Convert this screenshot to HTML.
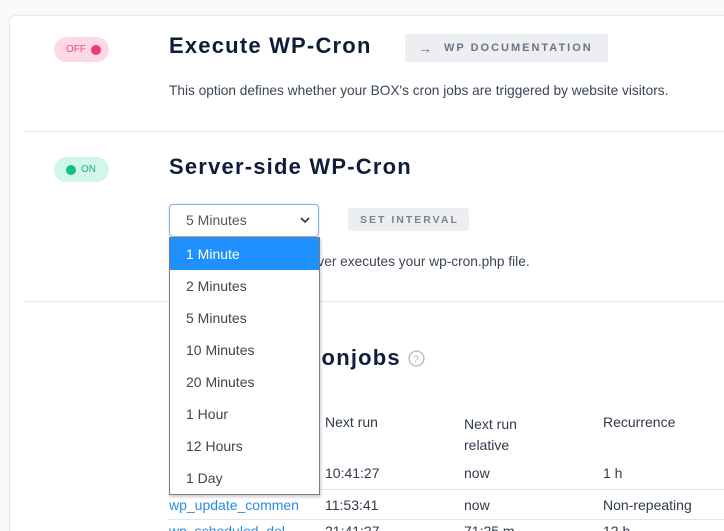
<!DOCTYPE html>
<html><head><meta charset="utf-8"><style>
*{margin:0;padding:0;box-sizing:border-box}
html,body{width:724px;height:531px;overflow:hidden}
body{background:#f8f9fb;font-family:"Liberation Sans",sans-serif;position:relative;color:#1e2a3e}
.card{position:absolute;left:9px;top:15px;width:730px;height:540px;background:#fff;border:1px solid #e4e7ec;border-radius:6px}
.a{position:absolute}
.pill{position:absolute;height:25px;border-radius:13px;font-size:10px;display:flex;align-items:center;gap:5px;padding:0 12px}
.dot{width:10px;height:10px;border-radius:50%;flex-shrink:0}
h2{position:absolute;font-size:22px;font-weight:bold;color:#0e1d3a;letter-spacing:1.2px;white-space:nowrap}
.p{position:absolute;font-size:13.7px;color:#3a4556;white-space:nowrap}
.btn{position:absolute;background:#eceef1;border-radius:3px;font-size:11px;font-weight:bold;letter-spacing:2px;color:#6b7482;display:flex;align-items:center;white-space:nowrap}
.hr{position:absolute;left:24px;right:0;height:1px;background:#e8eaee}
.t{position:absolute;font-size:14px;color:#2f3a4b;white-space:nowrap}
.dd{position:absolute;left:169px;top:237px;width:151px;height:258px;background:#fff;border:1px solid #7a7a7a;box-shadow:1px 2px 3px rgba(0,0,0,.2)}
.dd div{height:32px;line-height:32px;padding-left:16px;font-size:14px;color:#444}
</style></head><body>
<div class="card"></div>
<div class="pill" style="left:54px;top:37px;width:55px;background:#fdd9e3;color:#f0467a">OFF<span class="dot" style="background:#f0396f"></span></div>
<h2 style="left:169px;top:33px">Execute WP-Cron</h2>
<div class="btn" style="left:405px;top:34px;width:203px;height:28px;padding-left:13px"><span style="font-weight:normal;letter-spacing:0;margin-right:12px;font-size:14px">→</span>WP DOCUMENTATION</div>
<div class="p" style="left:169px;top:83px">This option defines whether your BOX's cron jobs are triggered by website visitors.</div>
<div class="hr" style="top:131px"></div>
<div class="pill" style="left:54px;top:157px;width:55px;background:#d3f6ea;color:#18b57c"><span class="dot" style="background:#0fc27e"></span>ON</div>
<h2 style="left:169px;top:154px">Server-side WP-Cron</h2>
<div class="a" style="left:169px;top:204px;width:150px;height:33px;border:1px solid #8bb4e6;border-radius:4px;box-shadow:0 0 2px #bcd6f4;font-size:14px;color:#555;line-height:31px;padding-left:16px">5 Minutes<svg style="position:absolute;right:8px;top:12px" width="10" height="7" viewBox="0 0 10 7"><path d="M1 1l4 4 4-4" fill="none" stroke="#333" stroke-width="1.6"/></svg></div>
<div class="btn" style="left:348px;top:208px;width:121px;height:23px;padding-left:12px;font-size:10.5px;color:#7b8390">SET INTERVAL</div>
<div class="p" style="left:169px;top:254px">Define how often the server executes your wp-cron.php file.</div>
<div class="hr" style="top:301px"></div>
<h2 style="left:169px;top:345px">Scheduled cronjobs <svg style="vertical-align:-2px" width="17" height="17" viewBox="0 0 16 16"><circle cx="8" cy="8" r="7" fill="none" stroke="#b6bcc5" stroke-width="1.3"/><text x="8" y="12" font-size="10" text-anchor="middle" fill="#b6bcc5" font-family="Liberation Sans" font-weight="normal">?</text></svg></h2>
<div class="t" style="left:325px;top:414px">Next run</div>
<div class="t" style="left:464px;top:414px;line-height:21px">Next run<br>relative</div>
<div class="t" style="left:603px;top:414px">Recurrence</div>
<div class="t" style="left:169px;top:465px;color:#2a8ae8">wp_version_check</div>
<div class="t" style="left:325px;top:465px">10:41:27</div>
<div class="t" style="left:464px;top:465px">now</div>
<div class="t" style="left:603px;top:465px">1 h</div>
<div class="a" style="left:169px;right:0;top:489px;height:1px;background:#e3e5e9"></div>
<div class="t" style="left:169px;top:497px;color:#2a8ae8">wp_update_commen</div>
<div class="t" style="left:325px;top:497px">11:53:41</div>
<div class="t" style="left:464px;top:497px">now</div>
<div class="t" style="left:603px;top:497px">Non-repeating</div>
<div class="a" style="left:169px;right:0;top:519px;height:1px;background:#e3e5e9"></div>
<div class="t" style="left:169px;top:523px;color:#2a8ae8">wp_scheduled_del</div>
<div class="t" style="left:325px;top:523px">21:41:27</div>
<div class="t" style="left:464px;top:523px">71:25 m</div>
<div class="t" style="left:603px;top:523px">12 h</div>
<div class="dd">
<div style="background:#1e90ff;color:#fff">1 Minute</div>
<div>2 Minutes</div><div>5 Minutes</div><div>10 Minutes</div><div>20 Minutes</div><div>1 Hour</div><div>12 Hours</div><div>1 Day</div>
</div>
</body></html>
